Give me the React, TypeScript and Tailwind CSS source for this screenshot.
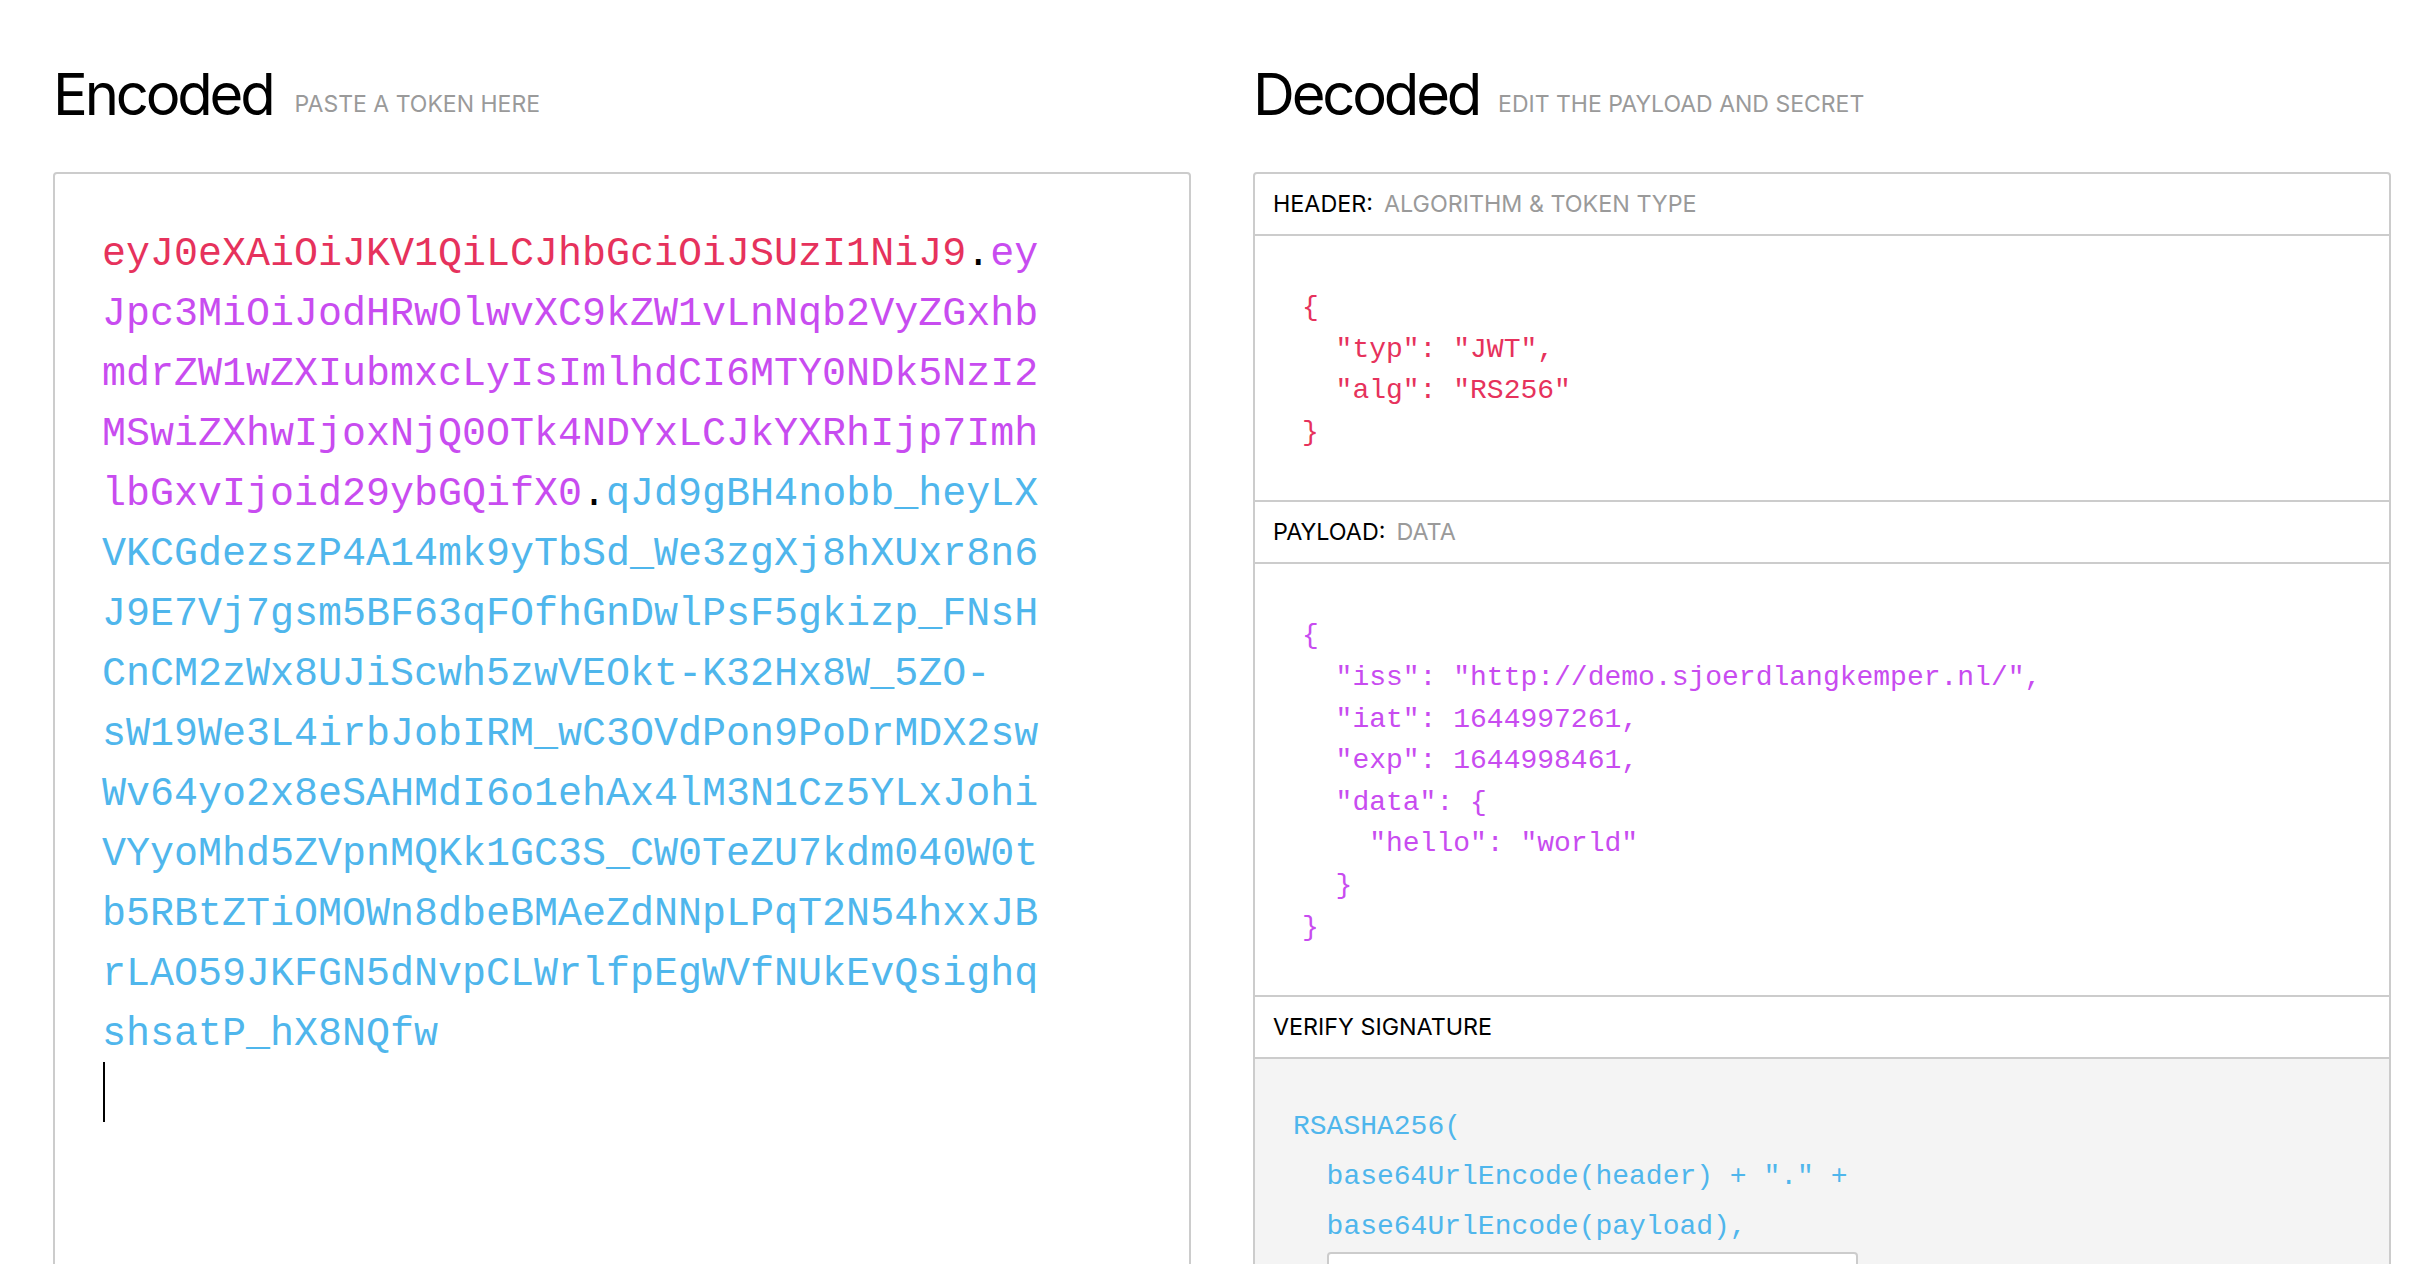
import React from "react";

const HEADER_PART = "eyJ0eXAiOiJKV1QiLCJhbGciOiJSUzI1NiJ9";
const PAYLOAD_PART =
  "eyJpc3MiOiJodHRwOlwvXC9kZW1vLnNqb2VyZGxhbmdrZW1wZXIubmxcLyIsImlhdCI6MTY0NDk5NzI2MSwiZXhwIjoxNjQ0OTk4NDYxLCJkYXRhIjp7ImhlbGxvIjoid29ybGQifX0";
const SIG_PART =
  "qJd9gBH4nobb_heyLXVKCGdezszP4A14mk9yTbSd_We3zgXj8hXUxr8n6J9E7Vj7gsm5BF63qFOfhGnDwlPsF5gkizp_FNsHCnCM2zWx8UJiScwh5zwVEOkt-K32Hx8W_5ZO-sW19We3L4irbJobIRM_wC3OVdPon9PoDrMDX2swWv64yo2x8eSAHMdI6o1ehAx4lM3N1Cz5YLxJohiVYyoMhd5ZVpnMQKk1GC3S_CW0TeZU7kdm040W0tb5RBtZTiOMOWn8dbeBMAeZdNNpLPqT2N54hxxJBrLAO59JKFGN5dNvpCLWrlfpEgWVfNUkEvQsighqshsatP_hX8NQfw";

const headerJson = `{
  "typ": "JWT",
  "alg": "RS256"
}`;

const payloadJson = `{
  "iss": "http://demo.sjoerdlangkemper.nl/",
  "iat": 1644997261,
  "exp": 1644998461,
  "data": {
    "hello": "world"
  }
}`;

const sigText = `RSASHA256(
  base64UrlEncode(header) + "." +
  base64UrlEncode(payload),`;

function SectionBar({ label, sub }: { label: string; sub?: string }) {
  return (
    <div className="flex h-[62px] shrink-0 items-center border-b-2 border-[#cccccc] pl-[18px] text-[23.3px] leading-[28px] font-['Inter',sans-serif]">
      <span className="text-black">{label}</span>
      {sub ? <span className="ml-[11px] text-[#9a9a9a]">{sub}</span> : null}
    </div>
  );
}

export default function App() {
  return (
    <div className="h-[1264px] overflow-hidden bg-white">
      <div className="flex gap-[62px] pl-[53px] pt-[65px]">
        {/* Encoded */}
        <section className="w-[1138px] shrink-0">
          <h2 className="h-[58px] whitespace-nowrap text-[58px] leading-[58px] tracking-[-0.055em] text-black font-['Inter',sans-serif] font-normal">
            Encoded
            <span className="ml-[22px] align-[3px] text-[23px] tracking-normal text-[#9a9a9a]">
              PASTE A TOKEN HERE
            </span>
          </h2>
          <div className="mt-[49px] h-[1200px] rounded-[4px] border-2 border-[#cccccc] pl-[47px] pt-[51px]">
            <div className="w-[950px] break-words text-[40px] leading-[60px] font-['Liberation_Mono',monospace]">
              <span className="text-[#e6325c]">{HEADER_PART}</span>
              <span className="text-black">.</span>
              <span className="text-[#c84cf0]">{PAYLOAD_PART}</span>
              <span className="text-black">.</span>
              <span className="text-[#4fb6ec]">{SIG_PART}</span>
            </div>
            <div className="ml-[1px] -mt-[3px] h-[60px] w-[2px] bg-black" />
          </div>
        </section>

        {/* Decoded */}
        <section className="w-[1138px] shrink-0">
          <h2 className="h-[58px] whitespace-nowrap text-[58px] leading-[58px] tracking-[-0.055em] text-black font-['Inter',sans-serif] font-normal">
            Decoded
            <span className="ml-[19px] align-[3px] text-[23px] tracking-normal text-[#9a9a9a]">
              EDIT THE PAYLOAD AND SECRET
            </span>
          </h2>
          <div className="mt-[49px] flex h-[1200px] flex-col overflow-hidden rounded-[4px] border-2 border-[#cccccc]">
            <SectionBar label="HEADER:" sub="ALGORITHM & TOKEN TYPE" />
            <div className="shrink-0 border-b-2 border-[#cccccc] pb-[47px] pl-[47px] pt-[51px]">
              <pre className="text-[28px] leading-[41.6px] text-[#e6325c] font-['Liberation_Mono',monospace]">
                {headerJson}
              </pre>
            </div>
            <SectionBar label="PAYLOAD:" sub="DATA" />
            <div className="shrink-0 border-b-2 border-[#cccccc] pb-[47px] pl-[47px] pt-[51px]">
              <pre className="text-[28px] leading-[41.6px] text-[#c84cf0] font-['Liberation_Mono',monospace]">
                {payloadJson}
              </pre>
            </div>
            <SectionBar label="VERIFY SIGNATURE" />
            <div className="flex-1 bg-[#f4f4f4] pl-[38px] pt-[43px]">
              <pre className="text-[28px] leading-[50px] text-[#4fb6ec] font-['Liberation_Mono',monospace]">
                {sigText}
              </pre>
              <div className="ml-[34px] h-[160px] w-[531px] rounded-[4px] border-2 border-[#cccccc] bg-white" />
            </div>
          </div>
        </section>
      </div>
    </div>
  );
}
